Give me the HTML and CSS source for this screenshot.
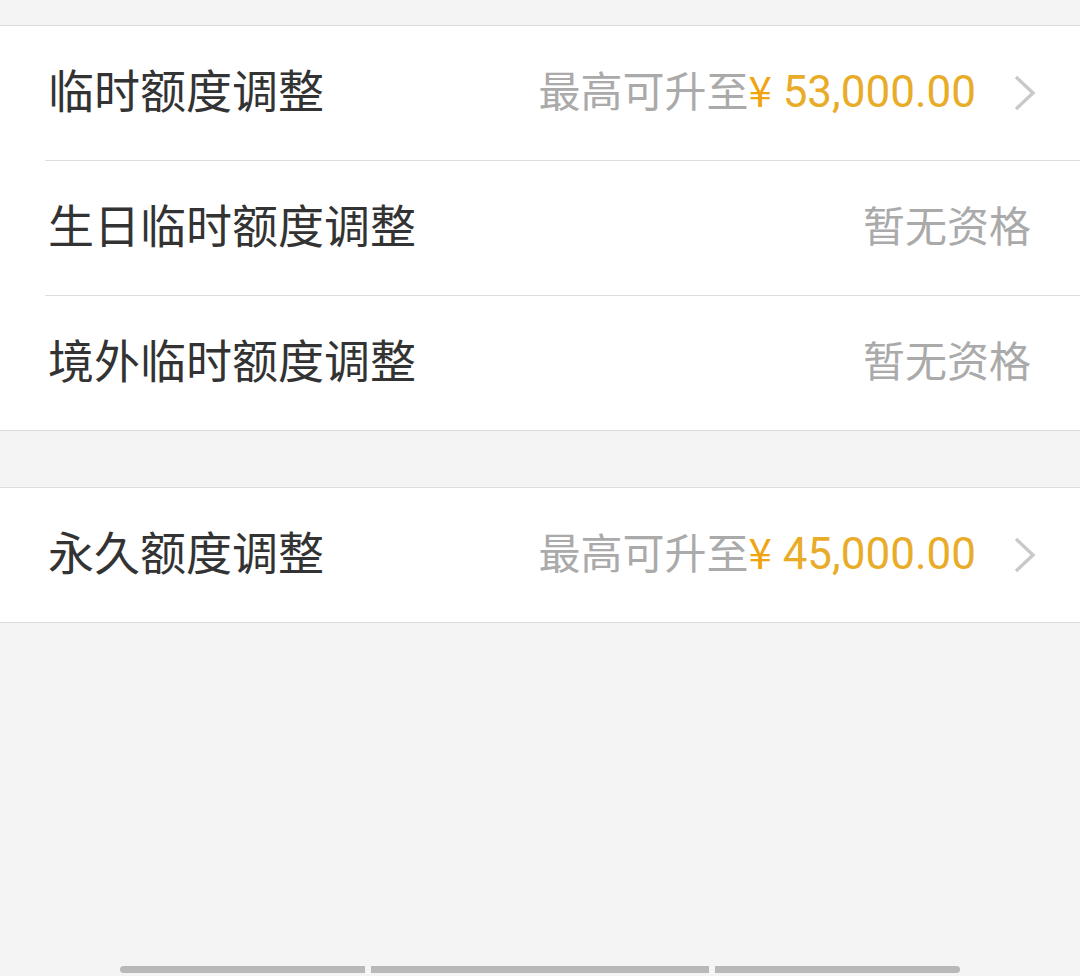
FILE: index.html
```html
<!DOCTYPE html>
<html lang="zh-CN">
<head>
    <meta charset="UTF-8">
    <meta name="viewport" content="width=device-width, initial-scale=1.0">
    <title>额度调整</title>
    <link rel="stylesheet" href="styles.css">
</head>
<body>
    <div class="top-gap"></div>
    <div class="group">
        <div class="item">
            <div class="item-inner">
                <span class="title">临时额度调整</span>
                <span class="extra">最高可升至<span class="amount"><span class="yen">¥</span> 53,000.00</span></span>
                <svg class="chevron" width="24" height="40" viewBox="0 0 24 40"><path d="M3 4 L20 20 L3 36" fill="none" stroke="#c9c9c9" stroke-width="3.4"/></svg>
            </div>
        </div>
        <div class="item">
            <div class="item-inner">
                <span class="title">生日临时额度调整</span>
                <span class="extra no-arrow">暂无资格</span>
            </div>
        </div>
        <div class="item">
            <div class="item-inner">
                <span class="title">境外临时额度调整</span>
                <span class="extra no-arrow">暂无资格</span>
            </div>
        </div>
    </div>
    <div class="gap"></div>
    <div class="group">
        <div class="item">
            <div class="item-inner">
                <span class="title">永久额度调整</span>
                <span class="extra">最高可升至<span class="amount"><span class="yen">¥</span> 45,000.00</span></span>
                <svg class="chevron" width="24" height="40" viewBox="0 0 24 40"><path d="M3 4 L20 20 L3 36" fill="none" stroke="#c9c9c9" stroke-width="3.4"/></svg>
            </div>
        </div>
    </div>
    <div class="scrollbar">
        <div class="bar bar-1"></div>
        <div class="bar bar-2"></div>
        <div class="bar bar-3"></div>
    </div>
</body>
</html>
```

FILE: styles.css
```css
body {
    margin: 0;
    padding: 0;
    background-color: #F4F4F4;
    font-family: "Noto Sans CJK SC", "Noto Sans", sans-serif;
    height: 976px;
    overflow: hidden;
    position: relative;
}
.top-gap {
    height: 25px;
}
.gap {
    height: 56px;
}
.group {
    background-color: #fff;
    border-top: 1px solid #DDDDDD;
    border-bottom: 1px solid #DDDDDD;
}
.item {
    padding-left: 45px;
}
.item-inner {
    height: 124px;
    padding-bottom: 10px;
    display: flex;
    align-items: center;
    padding-left: 3px;
    padding-right: 45px;
    border-bottom: 1px solid #DDDDDD;
}
.item:last-child .item-inner {
    border-bottom: none;
}
.title {
    font-size: 46px;
    color: #333333;
    flex: 1;
}
.extra {
    font-size: 42px;
    color: #AAAAAA;
}
.extra.no-arrow {
    margin-right: 4px;
}
.amount {
    font-family: Roboto, "Noto Sans CJK SC", sans-serif;
    font-size: 44px;
    color: #E8AC28;
}
.yen {
    font-family: "Noto Sans CJK SC", sans-serif;
    font-size: 42px;
    color: #F0A412;
}
.chevron {
    margin-left: 37px;
    margin-right: -2px;
    margin-top: 9px;
}
.scrollbar {
    position: absolute;
    left: 120px;
    top: 966px;
    display: flex;
    gap: 6px;
}
.bar {
    height: 7px;
    background-color: #B8B8B8;
}
.bar-1 {
    width: 245px;
    border-radius: 4px 0 0 4px;
}
.bar-2 {
    width: 338px;
}
.bar-3 {
    width: 245px;
    border-radius: 0 4px 4px 0;
}
```
